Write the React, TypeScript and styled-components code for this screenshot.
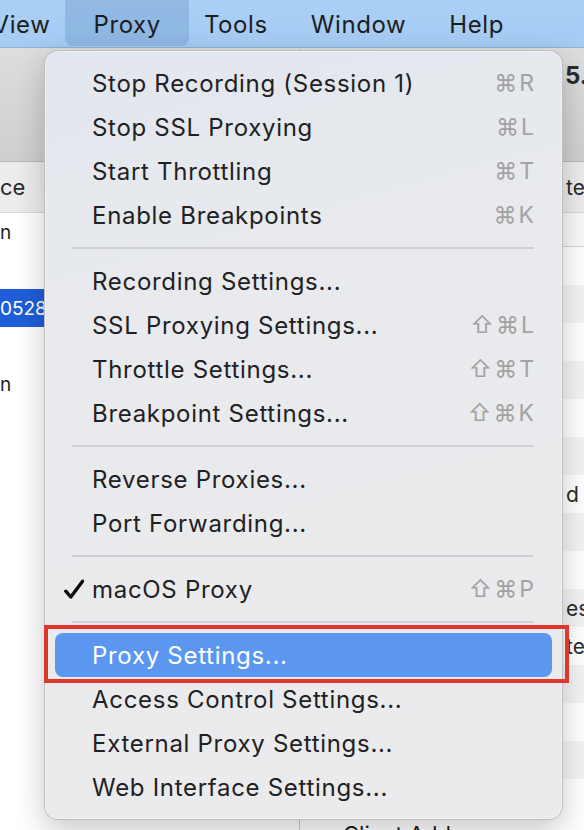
import * as React from 'react';
import styled, { createGlobalStyle } from 'styled-components';

const GlobalStyle = createGlobalStyle`
  html, body {
    margin: 0;
    padding: 0;
    background: #ffffff;
  }
  body {
    font-family: Inter, "Noto Sans", "Liberation Sans", sans-serif;
  }
`;

type Entry = {
  label: string;
  keys?: string;
  checked?: boolean;
  active?: boolean;
};

const groups: Entry[][] = [
  [
    { label: 'Stop Recording (Session 1)', keys: '⌘R' },
    { label: 'Stop SSL Proxying', keys: '⌘L' },
    { label: 'Start Throttling', keys: '⌘T' },
    { label: 'Enable Breakpoints', keys: '⌘K' },
  ],
  [
    { label: 'Recording Settings...' },
    { label: 'SSL Proxying Settings...', keys: '⇧⌘L' },
    { label: 'Throttle Settings...', keys: '⇧⌘T' },
    { label: 'Breakpoint Settings...', keys: '⇧⌘K' },
  ],
  [
    { label: 'Reverse Proxies...' },
    { label: 'Port Forwarding...' },
  ],
  [{ label: 'macOS Proxy', keys: '⇧⌘P', checked: true }],
  [
    { label: 'Proxy Settings...', active: true },
    { label: 'Access Control Settings...' },
    { label: 'External Proxy Settings...' },
    { label: 'Web Interface Settings...' },
  ],
];

const barItems = ['View', 'Proxy', 'Tools', 'Window', 'Help'];

// rows of the list behind the menu (only their edges show)
const leftRows = ['n', '', '0528091', '', 'n', '', '', '', '', '', '', '', '', '', ''];
const rightRows = ['', '', '', '', '', '', 'd', '', '', 'es', 'te', '', '', '', ''];

export default function App() {
  return (
    <>
      <GlobalStyle />
      <Screen>
        <MenuBar>
          <BarStrip>
            {barItems.map((name) => (
              <BarItem key={name} $active={name === 'Proxy'}>
                {name}
              </BarItem>
            ))}
          </BarStrip>
        </MenuBar>

        <Window>
          <LeftPane>
            <Toolbar />
            <ColumnHeader>ce</ColumnHeader>
            {leftRows.map((text, i) => (
              <ListRow key={i} $selected={i === 2}>
                {text}
              </ListRow>
            ))}
          </LeftPane>
          <RightPane>
            <Toolbar>
              <TailText $bold>5.</TailText>
            </Toolbar>
            <ColumnHeader>
              <TailText>te</TailText>
            </ColumnHeader>
            <SubHeader />
            {rightRows.map((text, i) => (
              <StripeRow key={i} $odd={i % 2 === 1}>
                <TailText>{text}</TailText>
              </StripeRow>
            ))}
            <DetailTitle>Client Address</DetailTitle>
          </RightPane>
        </Window>

        <Dropdown>
          {groups.map((group, gi) => (
            <React.Fragment key={gi}>
              {gi > 0 && <Separator />}
              {group.map((item) => (
                <MenuRow key={item.label} $active={!!item.active}>
                  <Gutter>
                    {item.checked && (
                      <svg width="20" height="20" viewBox="0 0 20 20">
                        <path
                          d="M1.8 12.2 L6.8 18 L18.6 2.2"
                          fill="none"
                          stroke="#0c0c0c"
                          strokeWidth="3.4"
                          strokeLinecap="round"
                          strokeLinejoin="round"
                        />
                      </svg>
                    )}
                  </Gutter>
                  <Label>{item.label}</Label>
                  {item.keys && <Keys>{item.keys}</Keys>}
                </MenuRow>
              ))}
            </React.Fragment>
          ))}
        </Dropdown>

        <Callout />
      </Screen>
    </>
  );
}

const Screen = styled.div`
  position: relative;
  width: 584px;
  height: 830px;
  overflow: hidden;
  background: #ffffff;
`;

const MenuBar = styled.div`
  height: 47px;
  background: linear-gradient(180deg, #aad0f6 0%, #a5cbf3 100%);
  border-bottom: 1px solid #8eb1d6;
  overflow: hidden;
`;

const BarStrip = styled.div`
  display: flex;
  height: 100%;
  margin-left: -29px;
`;

const BarItem = styled.div<{ $active: boolean }>`
  display: flex;
  align-items: center;
  height: 46px;
  padding: 2px ${(p) => (p.$active ? 28 : 21.5)}px 0;
  box-sizing: border-box;
  margin: 0 ${(p) => (p.$active ? -6.5 : 0)}px;
  border-radius: 0 0 8px 8px;
  background: ${(p) => (p.$active ? 'rgba(50, 100, 160, 0.2)' : 'transparent')};
  font-size: 24px;
  letter-spacing: 0.6px;
  color: #1c1d1f;
  white-space: nowrap;
`;

const Window = styled.div`
  display: flex;
  height: 782px;
  background: #ffffff;
`;

const LeftPane = styled.div`
  width: 299px;
  display: flex;
  flex-direction: column;
  border-right: 1px solid #c9c9c9;
  overflow: hidden;
`;

const RightPane = styled.div`
  flex: 1;
  display: flex;
  flex-direction: column;
  overflow: hidden;
`;

const Toolbar = styled.div`
  height: 113px;
  flex-shrink: 0;
  display: flex;
  align-items: flex-start;
  background: linear-gradient(180deg, #dedede 0%, #cfcfcf 100%);
  border-bottom: 1px solid #b7b7b7;
`;

const ColumnHeader = styled.div`
  height: 50px;
  flex-shrink: 0;
  display: flex;
  align-items: center;
  background: #ececec;
  border-bottom: 1px solid #d8d8d8;
  font-size: 22px;
  color: #2a2a2a;
`;

const SubHeader = styled.div`
  height: 33px;
  flex-shrink: 0;
  border-bottom: 1px solid #d4d4d4;
  background: #fafafa;
`;

const TailText = styled.span<{ $bold?: boolean }>`
  padding-left: ${(p) => (p.$bold ? 265 : 266)}px;
  margin-top: ${(p) => (p.$bold ? 13 : 0)}px;
  font-size: ${(p) => (p.$bold ? 24 : 21)}px;
  font-weight: ${(p) => (p.$bold ? 700 : 400)};
  color: #2a2a2a;
  white-space: nowrap;
`;

const ListRow = styled.div<{ $selected: boolean }>`
  height: 38px;
  flex-shrink: 0;
  display: flex;
  align-items: center;
  font-size: 19px;
  white-space: nowrap;
  color: ${(p) => (p.$selected ? '#ffffff' : '#1d1d1d')};
  background: ${(p) => (p.$selected ? '#1f5ed8' : 'transparent')};
`;

const StripeRow = styled.div<{ $odd: boolean }>`
  height: 38px;
  flex-shrink: 0;
  display: flex;
  align-items: center;
  background: ${(p) => (p.$odd ? '#f4f4f5' : '#ffffff')};
`;

const DetailTitle = styled.div`
  padding: 4px 0 0 43px;
  font-size: 22px;
  color: #1d1d1d;
  white-space: nowrap;
`;

/* the open Proxy menu, floating over the window */
const Dropdown = styled.div`
  position: absolute;
  left: 44px;
  top: 50px;
  width: 517px;
  padding: 10px 0;
  box-sizing: content-box;
  border: 1px solid rgba(0, 0, 0, 0.18);
  border-radius: 14px;
  background: linear-gradient(165deg, #e2e7ee 0%, #e9eaed 35%, #ebebed 100%);
  box-shadow: 0 10px 30px rgba(0, 0, 0, 0.22), inset 0 0 0 1px rgba(255, 255, 255, 0.35);
`;

const Separator = styled.div`
  height: 2px;
  margin: 10px 28px 10px 27px;
  background: #cfd0d3;
`;

const MenuRow = styled.div<{ $active: boolean }>`
  display: flex;
  align-items: center;
  height: 44px;
  margin: 0 10px;
  padding-right: 18px;
  border-radius: 8px;
  background: ${(p) => (p.$active ? '#5b97f0' : 'transparent')};
  color: ${(p) => (p.$active ? '#ffffff' : '#212123')};
`;

const Gutter = styled.div`
  width: 37px;
  flex-shrink: 0;
  display: flex;
  align-items: center;
  padding-left: 9px;
  box-sizing: border-box;
`;

const Label = styled.div`
  flex: 1;
  font-size: 24px;
  letter-spacing: 0.7px;
  white-space: nowrap;
`;

const Keys = styled.div`
  font-size: 23px;
  color: #a2a2a4;
  letter-spacing: 2px;
  margin-right: -2px;
  white-space: nowrap;
`;

/* red annotation box drawn over the screenshot */
const Callout = styled.div`
  position: absolute;
  left: 44px;
  top: 625px;
  width: 517px;
  height: 50px;
  border: 4px solid #e0372d;
`;
